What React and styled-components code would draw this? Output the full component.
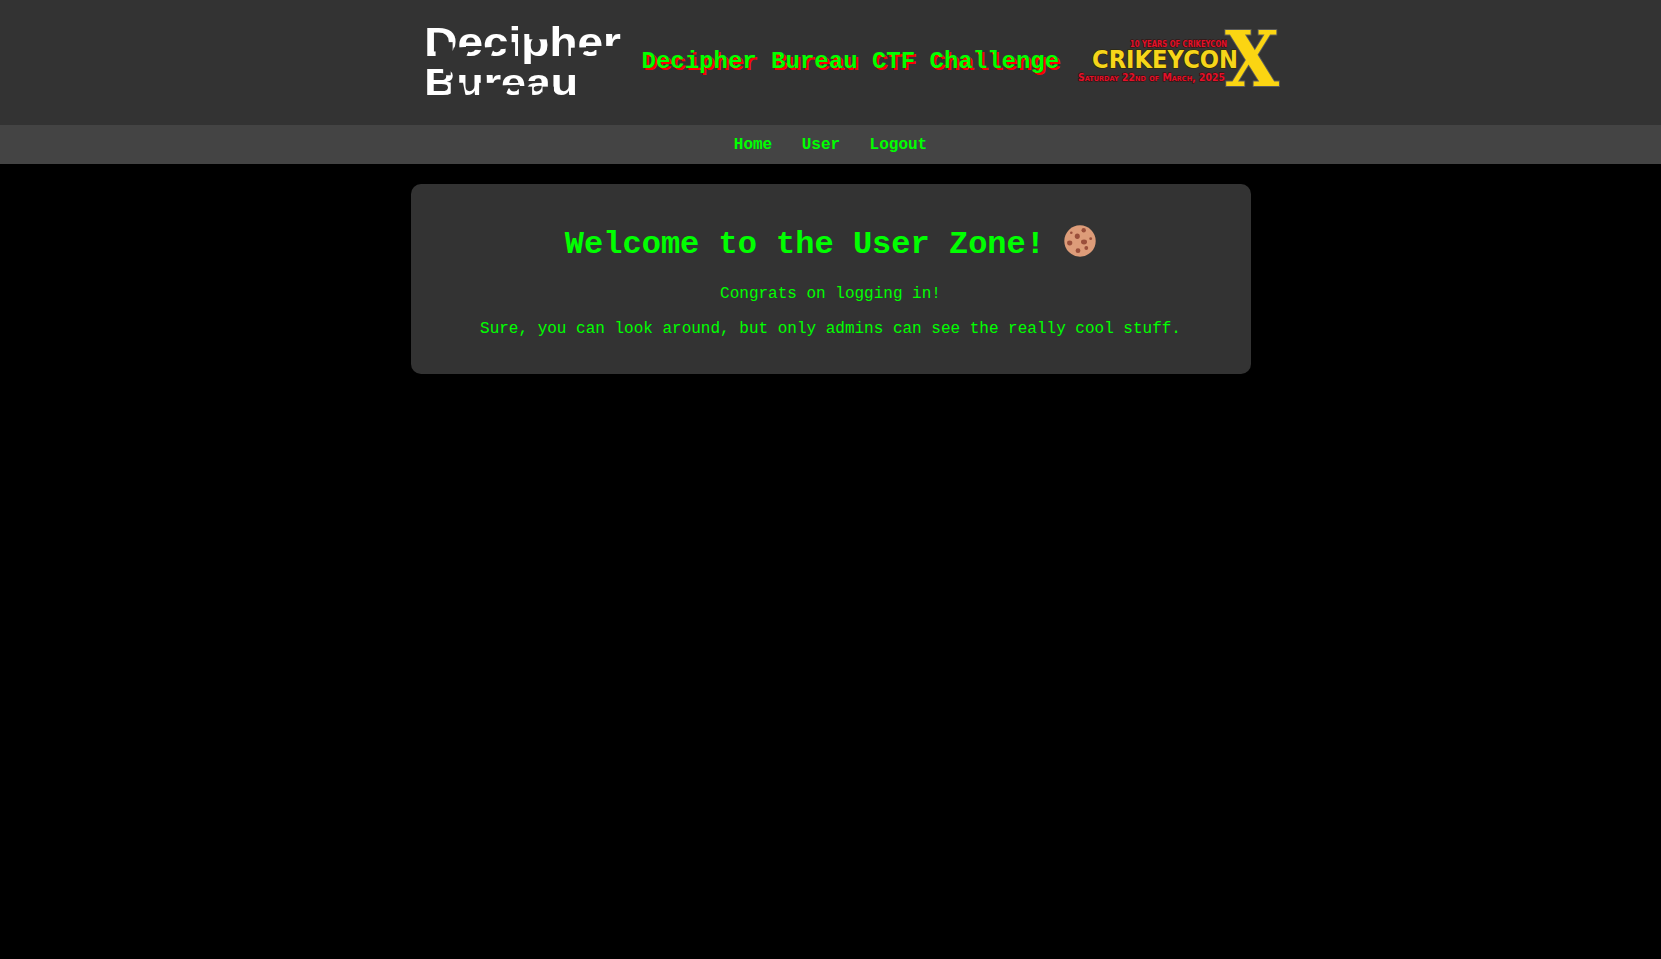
import styled, { createGlobalStyle } from "styled-components";

const GlobalStyle = createGlobalStyle`
  html, body {
    margin: 0;
    padding: 0;
    background: #000;
    color: #00ff00;
    font-family: "Liberation Mono", "Courier New", monospace;
  }
`;

const Header = styled.header`
  background: #333;
  height: 125px;
`;

const HeaderInner = styled.div`
  width: 840px;
  height: 100%;
  margin: 0 auto;
  display: flex;
  align-items: center;
`;

const LogoSlot = styled.div`
  flex: none;
  display: flex;
  width: ${(props) => props.width}px;
  height: 125px;
`;

const SiteTitle = styled.h1`
  flex: none;
  margin: 0 18px 2px 20px;
  font-size: 24px;
  font-weight: 700;
  color: #00ff00;
  text-shadow: 2px 2px #ff0000;
  white-space: nowrap;
`;

const Nav = styled.nav`
  background: #444;
  height: 39px;
  display: flex;
  justify-content: center;
  align-items: center;
`;

const NavLink = styled.a`
  margin: 0 14.75px;
  color: #00ff00;
  font-size: 16px;
  font-weight: 700;
  text-decoration: none;
`;

const Card = styled.main`
  width: 840px;
  box-sizing: border-box;
  margin: 20px auto 0;
  padding: 20px;
  height: 190px;
  background: #333;
  border-radius: 10px;
  text-align: center;
`;

const Heading = styled.h2`
  margin: 21px 0 22px;
  font-size: 32px;
  line-height: 37px;
  font-weight: 700;
  color: #00ff00;
`;

const Copy = styled.p`
  margin: 16px 0;
  font-size: 16px;
  line-height: 19px;
  color: #00ff00;
`;

const EmojiIcon = styled.svg`
  display: inline-block;
  width: 32px;
  height: 32px;
  vertical-align: -4px;
`;

const Cookie = () => (
  <EmojiIcon viewBox="0 0 32 32" aria-label="cookie">
    <circle cx="16" cy="16" r="15.7" fill="#dd9c79" />
    <g fill="#9a4f3b">
      <circle cx="7.3" cy="7.7" r="1.3" />
      <circle cx="19.7" cy="5.3" r="2.2" />
      <ellipse cx="13.3" cy="11.3" rx="2.5" ry="2.7" />
      <ellipse cx="20" cy="17" rx="3" ry="2.4" />
      <ellipse cx="5.7" cy="18" rx="2.6" ry="2.4" />
      <circle cx="26.7" cy="13.7" r="1.4" />
      <ellipse cx="14" cy="25.7" rx="2.4" ry="2.4" />
      <circle cx="22.3" cy="23" r="1.9" />
    </g>
  </EmojiIcon>
);

// cut-outs are in page pixels, the mask group shifts them onto the logo
const DecipherLogo = () => (
  <svg width="223" height="125" viewBox="0 0 223 125">
    <defs>
      <mask id="stencil" maskUnits="userSpaceOnUse" x="0" y="0" width="223" height="125">
        <rect width="223" height="125" fill="#fff" />
        <g fill="#000" transform="translate(-411 0)">
          <rect x="437" y="41" width="18" height="18" />
          <polygon points="456,47 484,45 484,48 472,50 468,59 456,59" />
          <polygon points="485,47 511,45 511,48 498,49 494,59 485,59" />
          <rect x="511" y="41" width="10" height="18" />
          <rect x="536" y="30" width="18" height="8" />
          <polygon points="580,47 608,46 608,49 594,51 590,59 580,59" />
          <rect x="607" y="45" width="18" height="14" />
          <rect x="445" y="64" width="8" height="12" />
          <polygon points="453,84 466,84 469,99 453,99" />
          <rect x="483" y="84" width="17" height="15" />
          <polygon points="500,87 526,86 526,89 514,90 510,99 500,99" />
          <rect x="525" y="88" width="14" height="11" />
          <rect x="550" y="88" width="12" height="11" />
        </g>
      </mask>
    </defs>
    <g mask="url(#stencil)" fill="#fff" fontFamily="'Liberation Sans', sans-serif" fontWeight="700">
      <text transform="translate(14 56) scale(1.13 1)" fontSize="43">Decipher</text>
      <text transform="translate(14 97) scale(1.18 1)" fontSize="40">Bureau</text>
    </g>
  </svg>
);

const CrikeyLogo = () => (
  <svg width="203" height="125" viewBox="0 0 203 125">
    <g fontFamily="'DejaVu Sans', sans-serif" fontWeight="700" paintOrder="stroke">
      <text x="53" y="47" fontSize="8" fill="#e3122b" stroke="#3a0505" strokeWidth="1" textLength="97" lengthAdjust="spacingAndGlyphs">10 YEARS OF CRIKEYCON</text>
      <text x="15" y="68" fontSize="24" fill="#f6d51a" stroke="#2c2600" strokeWidth="1.2" textLength="146" lengthAdjust="spacingAndGlyphs">CRIKEYCON</text>
      <text x="1" y="81" fontSize="10" fontVariant="small-caps" fill="#e3122b" stroke="#3a0505" strokeWidth="1" textLength="147" lengthAdjust="spacingAndGlyphs">Saturday 22nd of March, 2025</text>
      <text x="148" y="86" fontSize="76" fontFamily="'DejaVu Serif', serif" fill="#fbd512" stroke="#5a5a5a" strokeWidth="2" textLength="54" lengthAdjust="spacingAndGlyphs">X</text>
    </g>
  </svg>
);

const App = () => (
  <>
    <GlobalStyle />
    <Header>
      <HeaderInner>
        <LogoSlot width={211}>
          <DecipherLogo />
        </LogoSlot>
        <SiteTitle>Decipher Bureau CTF Challenge</SiteTitle>
        <LogoSlot width={203}>
          <CrikeyLogo />
        </LogoSlot>
      </HeaderInner>
    </Header>
    <Nav>
      <NavLink href="#">Home</NavLink>
      <NavLink href="#">User</NavLink>
      <NavLink href="#">Logout</NavLink>
    </Nav>
    <Card>
      <Heading>
        Welcome to the User Zone! <Cookie />
      </Heading>
      <Copy>Congrats on logging in!</Copy>
      <Copy>Sure, you can look around, but only admins can see the really cool stuff.</Copy>
    </Card>
  </>
);

export default App;
